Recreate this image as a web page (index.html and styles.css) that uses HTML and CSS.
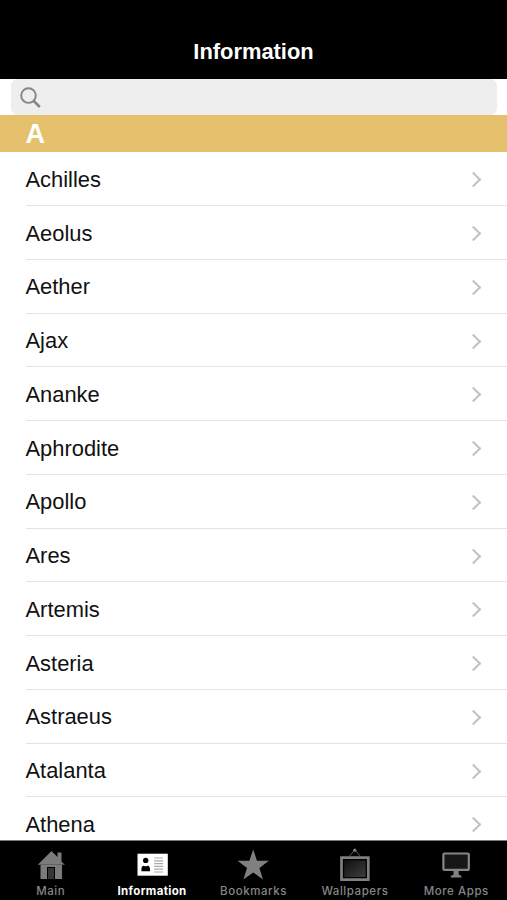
FILE: index.html
```html
<!DOCTYPE html>
<html lang="en">
<head>
<meta charset="utf-8">
<title>Information</title>
<link rel="stylesheet" href="styles.css">
</head>
<body>
<div class="app">
  <header class="header"><h1>Information</h1></header>
  <div class="search">
    <div class="search-field">
      <svg width="22" height="22" viewBox="0 0 22 22" fill="none" stroke="#858585"><circle cx="8.5" cy="8.6" r="7.3" stroke-width="1.9"/><path d="M13.8 14l6 6" stroke-width="2.5"/></svg>
    </div>
  </div>
  <h2 class="section">A</h2>
  <main class="list">
    <div class="row"><span>Achilles</span><i class="chevron"></i></div>
    <div class="row"><span>Aeolus</span><i class="chevron"></i></div>
    <div class="row"><span>Aether</span><i class="chevron"></i></div>
    <div class="row"><span>Ajax</span><i class="chevron"></i></div>
    <div class="row"><span>Ananke</span><i class="chevron"></i></div>
    <div class="row"><span>Aphrodite</span><i class="chevron"></i></div>
    <div class="row"><span>Apollo</span><i class="chevron"></i></div>
    <div class="row"><span>Ares</span><i class="chevron"></i></div>
    <div class="row"><span>Artemis</span><i class="chevron"></i></div>
    <div class="row"><span>Asteria</span><i class="chevron"></i></div>
    <div class="row"><span>Astraeus</span><i class="chevron"></i></div>
    <div class="row"><span>Atalanta</span><i class="chevron"></i></div>
    <div class="row"><span>Athena</span><i class="chevron"></i></div>
  </main>
  <nav class="tabs">
    <a class="tab">
      <svg width="32" height="34" viewBox="0 0 32 34"><path fill="#7b7b7b" d="M16.5 4L3 17.5h2.5V32H12V20h8v12h7V17.5h2.5l-3-3V5.5h-4V10z"/><path d="M3 17.5h26.5" stroke="#5c5c5c" stroke-width=".8"/><path fill="#353535" d="M13 21h6v11h-6z"/></svg>
      <span>Main</span>
    </a>
    <a class="tab active">
      <svg width="32" height="34" viewBox="0 0 32 34"><path fill="#fff" d="M1.5 6.7h30.3v22H1.5z"/><circle cx="9.7" cy="13.4" r="2.7"/><path d="M5.4 24.3v-2q0-3.6 2.6-3.6 1.7 1.2 3.4 0 2.6 0 2.6 3.6v2z"/><path d="M18.2 11h9M18.2 13.8h9M18.2 16.6h9M18.2 19.4h9M18.2 22.2h9M18.2 25h9" stroke="#aaa" stroke-width="1.2"/></svg>
      <span>Information</span>
    </a>
    <a class="tab">
      <svg width="32" height="34" viewBox="0 0 32 34"><path fill="#808080" d="M16.2 2.5l3.8 11.3h11.9l-9.5 7.1 3.6 11.6-9.8-7-9.8 7 3.6-11.6-9.5-7.1h11.9z"/></svg>
      <span>Bookmarks</span>
    </a>
    <a class="tab">
      <svg width="32" height="34" viewBox="0 0 32 34"><defs><linearGradient id="canvas" x2="1" y2="1"><stop stop-color="#101010"/><stop offset="1" stop-color="#3d3d3d"/></linearGradient></defs><path d="M10 9.5L15.8 3l5.8 6.5" fill="none" stroke="#5c5c5c"/><circle cx="15.8" cy="3.2" r="1.6" fill="#808080"/><path d="M2.5 10.7h26.8v22H2.5z" fill="#000" stroke="#808080" stroke-width="2.7"/><path d="M5.2 13.4h21.4v16.6H5.2z" fill="url(#canvas)"/></svg>
      <span>Wallpapers</span>
    </a>
    <a class="tab">
      <svg width="32" height="34" viewBox="0 0 32 34"><rect x="3.4" y="6.5" width="25.4" height="16.4" rx="1" fill="#161616" stroke="#858585" stroke-width="2.2"/><path d="M13.5 23.8h5.2v3.9l2.7 1.1v1.6H10.8v-1.6l2.7-1.1z" fill="#808080"/></svg>
      <span>More Apps</span>
    </a>
  </nav>
</div>
</body>
</html>
```
FILE: styles.css
```css
* { box-sizing: border-box; }
body {
  margin: 0;
  background: #fff;
  font-family: "Liberation Sans", Arial, sans-serif;
}
.app {
  display: flex;
  flex-direction: column;
  height: 900px;
  overflow: hidden;
}
.header {
  flex: none;
  height: 79px;
  padding-top: 39px;
  background: #000;
  color: #fff;
  text-align: center;
}
h1 {
  margin: 0;
  font-size: 21.9px;
  line-height: 26px;
}
.search {
  flex: none;
  height: 36.4px;
  padding: 0 10px 0 11px;
}
.search-field {
  height: 100%;
  padding: 8px 9px;
  border-radius: 7px;
  background: #eee;
}
.search-field svg { display: block; }
.section {
  flex: none;
  height: 37px;
  margin: 0;
  padding-left: 25.5px;
  background: #e6c16d;
  color: #fff;
  font-size: 27px;
  line-height: 38px;
}
.list {
  flex: 1;
  min-height: 0;
  overflow: hidden;
}
.row {
  display: flex;
  align-items: center;
  justify-content: space-between;
  height: 53.75px;
  margin-left: 25.5px;
  padding: 2px 28px 0 0;
  border-bottom: 1px solid #e4e4e4;
  color: #111;
  font-size: 21.9px;
}
.chevron {
  width: 11px;
  height: 11px;
  border: solid #c2c2c2;
  border-width: 2px 2px 0 0;
  transform: rotate(45deg);
}
.tabs {
  flex: none;
  display: grid;
  grid-template-columns: repeat(5, 1fr);
  height: 60.5px;
  border-top: 1px solid #777;
  padding-top: 6px;
  background: #000;
}
.tab {
  display: flex;
  flex-direction: column;
  align-items: center;
  color: #868686;
  font: 500 11.5px/16px Inter, sans-serif;
  letter-spacing: .55px;
  white-space: nowrap;
}
.tab svg { flex: none; }
.tab span { margin-top: 2px; }
.active {
  color: #fff;
  font-weight: 700;
  letter-spacing: .35px;
}
```
